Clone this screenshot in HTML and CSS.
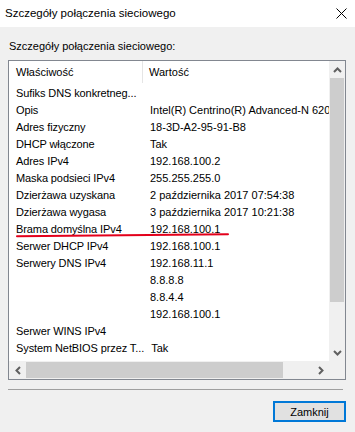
FILE: index.html
```html
<!DOCTYPE html>
<html lang="pl">
<head>
<meta charset="utf-8">
<title>Szczegóły połączenia sieciowego</title>
<link rel="stylesheet" href="styles.css">
</head>
<body>
<div class="dialog">
  <div class="titlebar">
    <span class="title">Szczegóły połączenia sieciowego</span>
    <svg class="close" width="11" height="11" viewBox="0 0 11 11"><path d="M0.5 0.5 L10.5 10.5 M10.5 0.5 L0.5 10.5" stroke="#000" stroke-width="1" fill="none"/></svg>
  </div>
  <div class="content">
    <div class="label">Szczegóły połączenia sieciowego:</div>
    <div class="listbox">
      <div class="view">
        <div class="row header"><div class="c1">Właściwość</div><div class="c2">Wartość</div></div>
        <div class="row"><div class="c1">Sufiks DNS konkretneg...</div><div class="c2"></div></div>
        <div class="row"><div class="c1">Opis</div><div class="c2">Intel(R) Centrino(R) Advanced-N 6200 AGN</div></div>
        <div class="row"><div class="c1">Adres fizyczny</div><div class="c2">18-3D-A2-95-91-B8</div></div>
        <div class="row"><div class="c1">DHCP włączone</div><div class="c2">Tak</div></div>
        <div class="row"><div class="c1">Adres IPv4</div><div class="c2">192.168.100.2</div></div>
        <div class="row"><div class="c1">Maska podsieci IPv4</div><div class="c2">255.255.255.0</div></div>
        <div class="row"><div class="c1">Dzierżawa uzyskana</div><div class="c2">2 października 2017 07:54:38</div></div>
        <div class="row"><div class="c1">Dzierżawa wygasa</div><div class="c2">3 października 2017 10:21:38</div></div>
        <div class="row"><div class="c1">Brama domyślna IPv4</div><div class="c2">192.168.100.1</div></div>
        <div class="row"><div class="c1">Serwer DHCP IPv4</div><div class="c2">192.168.100.1</div></div>
        <div class="row"><div class="c1">Serwery DNS IPv4</div><div class="c2">192.168.11.1</div></div>
        <div class="row"><div class="c1"></div><div class="c2">8.8.8.8</div></div>
        <div class="row"><div class="c1"></div><div class="c2">8.8.4.4</div></div>
        <div class="row"><div class="c1"></div><div class="c2">192.168.100.1</div></div>
        <div class="row"><div class="c1">Serwer WINS IPv4</div><div class="c2"></div></div>
        <div class="row"><div class="c1">System NetBIOS przez T...</div><div class="c2">Tak</div></div>
        <div class="row"><div class="c1">Adres IPv6 połączenia lo...</div><div class="c2">fe80::d31d:7807:f0e0:1823%11</div></div>
      </div>
      <div class="vscroll">
        <div class="sbtn"><svg width="9" height="6" viewBox="0 0 9 6"><path d="M1 5 L4.5 1.5 L8 5" stroke="#606060" stroke-width="2" fill="none"/></svg></div>
        <div class="vthumb"></div>
        <div class="vtrack"></div>
        <div class="sbtn"><svg width="9" height="6" viewBox="0 0 9 6"><path d="M1 1 L4.5 4.5 L8 1" stroke="#606060" stroke-width="2" fill="none"/></svg></div>
      </div>
      <div class="hscroll">
        <div class="sbtn"><svg width="6" height="9" viewBox="0 0 6 9"><path d="M5 1 L1.5 4.5 L5 8" stroke="#606060" stroke-width="2" fill="none"/></svg></div>
        <div class="hthumb"></div>
        <div class="htrack"></div>
        <div class="sbtn"><svg width="6" height="9" viewBox="0 0 6 9"><path d="M1 1 L4.5 4.5 L1 8" stroke="#606060" stroke-width="2" fill="none"/></svg></div>
      </div>
      <div class="corner"></div>
    </div>
    <div class="separator"></div>
    <div class="actions">
      <button class="btn">Zamknij</button>
    </div>
  </div>
  <svg class="mark" width="355" height="432" viewBox="0 0 355 432"><path d="M17 236.2 C80 235.8 150 235.4 228 234.3" stroke="#e3001b" stroke-width="2" fill="none" stroke-linecap="round"/></svg>
</div>
</body>
</html>
```

FILE: styles.css
```css
* { box-sizing: border-box; }
html, body { margin: 0; padding: 0; }
body {
  width: 355px;
  height: 432px;
  overflow: hidden;
  background: #f0f0f0;
  font-family: "Liberation Sans", Arial, sans-serif;
  font-size: 11px;
  color: #000;
}
.dialog {
  position: relative;
  width: 355px;
  height: 432px;
}
.titlebar {
  height: 27px;
  background: #fff;
  display: flex;
  align-items: center;
  justify-content: space-between;
  padding: 0 8px 0 5px;
}
.title {
  font-size: 11.5px;
  line-height: 14px;
  padding-bottom: 1px;
}
.close { display: block; margin-top: -1px; }
.content {
  padding: 12px 0 0 8px;
}
.label {
  height: 14px;
  line-height: 14px;
  padding-left: 1px;
}
.listbox {
  margin-top: 7px;
  width: 338px;
  height: 320px;
  border: 1px solid #828790;
  background: #fff;
  display: grid;
  grid-template-columns: 320px 16px;
  grid-template-rows: 300px 18px;
}
.view {
  overflow: hidden;
  white-space: nowrap;
}
.row {
  display: flex;
  height: 17px;
  line-height: 17px;
}
.row.header {
  height: 24px;
  line-height: 23px;
}
.c1 {
  flex: 0 0 134px;
  padding-left: 7px;
  letter-spacing: -0.1px;
}
.c2 {
  flex: 0 0 auto;
  padding-left: 7px;
}
.header .c1 {
  border-right: 1px solid #e5e5e5;
  height: 22px;
  letter-spacing: 0;
}
.header .c2 { padding-left: 6px; }
.vscroll {
  background: #f0f0f0;
  display: flex;
  flex-direction: column;
}
.sbtn {
  flex: 0 0 17px;
  display: flex;
  align-items: center;
  justify-content: center;
}
.sbtn svg { display: block; }
.vthumb {
  flex: 0 0 224px;
  margin: 0 1px;
  background: #cdcdcd;
}
.vtrack { flex: 1; }
.hscroll {
  background: #f0f0f0;
  display: flex;
  flex-direction: row;
}
.hthumb {
  flex: 0 0 257px;
  margin: 1px 0;
  background: #cdcdcd;
}
.htrack { flex: 1; }
.corner { background: #f0f0f0; }
.separator {
  margin-top: 9px;
  width: 335px;
  height: 1px;
  background: #a0a0a0;
}
.actions {
  display: flex;
  justify-content: flex-end;
  padding-right: 9px;
  margin-top: 11px;
}
.btn {
  width: 73px;
  height: 21px;
  border: 2px solid #0078d7;
  background: #e1e1e1;
  font-family: "Liberation Sans", Arial, sans-serif;
  font-size: 11px;
  color: #000;
  padding: 0;
  line-height: 16px;
}
.mark {
  position: absolute;
  left: 0;
  top: 0;
  pointer-events: none;
}
```
